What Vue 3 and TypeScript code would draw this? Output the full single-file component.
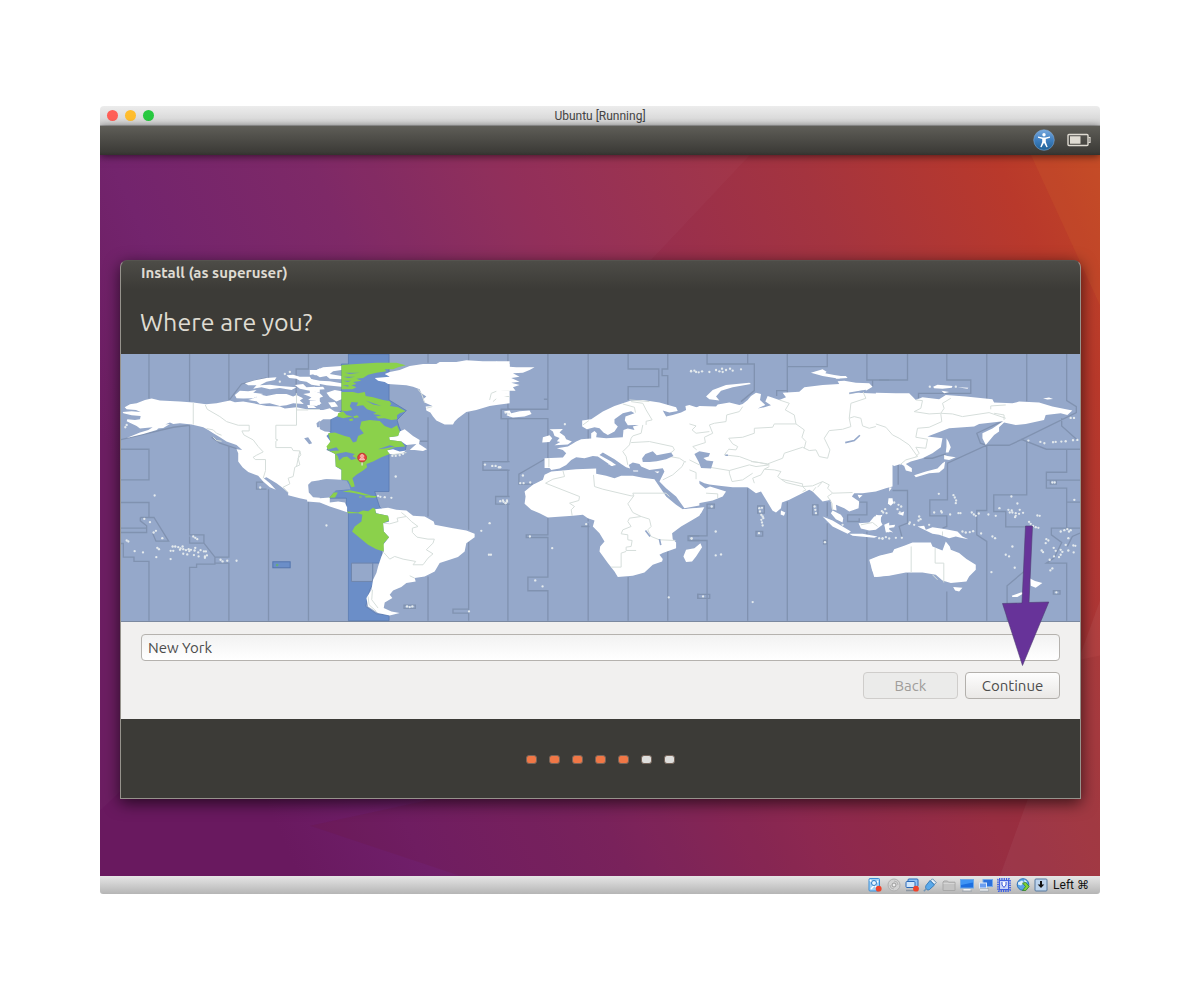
<script setup lang="ts">
import { ref } from 'vue'

interface Region {
  dx: number
  land: string
  borders: string
  zones: string
  specks: [number, number][]
}

const location = ref('New York')
const steps = 7
const currentStep = 5

// Map outlines, one entry per 190-unit slice of the world, west to east.
const regions: Region[] = [
  {
    dx: 0,
    land: 'M8,186L35,184 62,186 48,180 20,178 14,172 30,163 50,160 75,150 95,146 120,152 180,155 220,158 258,163 290,160 330,152 345,157 370,155 400,160 440,168 480,170 495,176 530,172 560,178 600,178V455L575,453 540,445 505,436 505,428 490,415 470,400 440,382 432,385 450,400 468,420 450,412 430,395 415,378 385,366 368,352 355,335 355,310 350,298 367,300 350,285 320,275 300,262 280,250 265,240 250,232 215,224 180,220 160,222 150,218 125,228 110,240 70,252 20,264 60,248 85,240 98,232 60,236 50,228 20,214 22,208 45,210 60,208 62,198 35,196 10,190Z M375,100L400,92 440,84 470,82 465,90 440,95 420,106 450,104 480,108 530,112 515,120 480,114 450,118 425,112 400,116 410,106 385,106Z M345,135L360,122 385,124 410,120 400,128 430,132 400,145 370,146 350,145Z M385,150L410,142 420,134 440,138 470,132 500,132 520,140 530,135 550,145 540,152 552,162 520,160 500,166 480,168 450,160 420,162 410,154Z M500,76L520,74 540,80 570,80 575,88 600,98V108L575,104 560,95 540,92 530,86 508,84Z M575,70L600,55V75L585,76Z M525,105L550,102 560,112 585,110 600,118V128L570,122 540,116Z M550,132L575,128 600,135V165L580,160 590,150 565,150 575,142Z M562,165L580,166 590,174 565,174Z M110,236L135,224 150,222 130,234Z',
    borders: 'M220,158V224 M256,165L262,178 300,200 320,215 355,226H388V243H366L372,255 400,270 415,290 430,306 410,316 400,322 406,329H437V362L430,385 M530,130V226H468V268L474,270 468,274V293H515L520,302 540,303 543,315 535,325 540,345 525,352 520,380 505,385 510,402 490,412 505,428 M530,180H600 M260,236L280,240 290,250 305,256 M280,262L290,272 305,274 M540,303L530,350',
    zones: 'M87,12V146 M209,12V155 M327,12V152 M446,12V84 M566,12V57H529V130 M327,152L365,102 440,84 M0,298H87V390H0 M0,458H87V503 M61,503H102L146,574H108L98,550 M61,503V513L80,528V548H0 M0,535H78 M0,581H10V622H42V635H87V813 M209,228V555H252V580H209V560 M252,580L285,622H327V290 M285,622V643H230V653H209V813 M285,640H327V813 M446,418V813 M440,418H410V397H430 M566,455V813 M0,270L160,232 210,226 M275,262L300,280 350,296',
    specks: [[73,507],[90,517],[104,437],[108,543],[101,548],[127,565],[20,572],[25,575],[44,604],[69,608],[109,622],[112,594],[117,598],[152,628],[152,603],[160,603],[158,590],[166,590],[175,592],[182,596],[188,590],[180,600],[190,598],[198,601],[206,598],[208,604],[190,612],[202,614],[213,600],[226,594],[224,602],[235,608],[222,616],[236,620],[242,601],[252,605],[258,605],[255,620],[255,624],[261,617],[220,560],[226,564],[232,568],[302,630],[308,635],[322,633],[350,633],[421,413],[495,72],[510,66],[480,95],[20,225],[16,232]]
  },
  {
    dx: 570,
    land: 'M-5,180L40,180 60,175 75,185 95,188 83,198 63,208 40,208 20,222 25,235 45,245 62,246 50,258 62,275 50,300 76,312 78,350 95,360V390L50,388 20,392 -10,400Z M-8,432L20,446 60,443V458L85,455 105,458 112,472V487L90,480 60,470 30,458 -8,455Z M0,60L20,60 40,52 95,48V60L70,64 60,72 95,78V88L60,86 50,78 30,82 15,72 0,75Z M0,86L30,92 60,94 95,100V110L50,106 20,100 0,98Z M5,112L40,110 45,118 15,120Z M50,128L75,120 95,124V148L80,155 60,142Z M0,118L30,130 40,140 20,148 0,140Z M0,152L25,150 35,160 20,168 0,166Z M55,158L75,156 85,170 65,172Z M195,84L240,80 225,72 240,66 270,60 300,48 340,42 380,42 390,36 440,36 470,31 520,34 600,34V160L560,165 540,168 500,180 470,186 445,205 435,215 430,224 405,224 380,212 370,200 362,188 350,182 348,170 368,168 345,158 340,148 350,140 335,130 330,118 310,110 290,106 235,102 225,96 205,92Z M270,245L285,238 310,258 330,270 328,282 352,298 340,303 315,300 300,300 320,282 290,285 275,275 240,270 238,262 265,258Z M230,302L250,298 270,305 290,302 275,312 240,312Z M195,478L235,474 260,480 290,482 310,498 345,500 372,515 375,525 430,535 470,542 495,552 495,562 470,580 465,605 445,622 420,630 390,640 375,665 345,680 315,685 318,695 290,700 275,712 250,722 240,735 248,745 225,758 222,775 245,785 270,790 240,797 205,790 175,770 170,745 185,720 190,690 200,670 205,650 215,620 222,605 220,585 238,562 222,545 220,520 238,515 235,498 200,490Z',
    borders: 'M222,520L240,522 265,515 262,505 290,500 275,488 M290,500L305,515 325,530 308,535 308,548 322,562 355,568H374L370,580 350,600 370,612 355,625 340,645 310,645 318,635 280,628 255,620 240,628 222,608 M540,150L545,130 570,120 600,122 M550,155L570,138 600,140 M560,125L590,132 M345,158L335,130 325,118 M350,175L368,170 M245,315L290,308 M175,740L178,765 200,785 M188,720L186,750 205,775 M315,685L300,678',
    zones: 'M355,12V38 M355,202V500 M477,12V32 M477,188V540 M477,575V813 M355,680V813 M330,274H355 M600,335H520V361H600 M600,178H575V206H600 M600,440H558V463H600 M283,766H317V776H283Z M477,778H430V790H477',
    specks: [[258,380],[540,520],[515,543],[538,615],[544,615],[526,344],[548,348],[558,348],[572,352],[572,454],[582,456],[592,452],[588,460],[50,527],[292,770],[300,772],[308,770],[248,318],[258,318],[270,316],[280,312],[478,785],[212,441],[225,442],[245,444],[588,188],[595,192],[205,438]]
  },
  {
    dx: 1140,
    land: 'M-10,34L10,44 30,42 30,50 50,52 105,52 90,60 70,68 40,70 60,80 35,84 60,95 35,98 60,105 40,112 48,122 5,122 30,136 10,142 22,152 -10,164Z M12,185L30,182 35,190 60,184 90,182 96,192 75,200 40,203 20,196 32,192Z M150,238L190,237 180,248 195,258 200,268 217,275 205,284 165,286 182,276 172,274 180,264 165,258 160,245Z M130,262L150,256 158,265 150,276 128,278Z M570,165L600,175V467L555,475 530,440 500,415 480,395 495,365 490,355 450,360 425,350 420,342 400,338 388,345 392,356 380,352 365,342 345,328 310,308 300,315 335,335 350,345 335,348 325,340 295,320 280,318 255,325 230,322 215,330 200,345 180,356 155,360 150,354 135,354V325L190,323 200,310 190,300 172,295 205,290 230,275 245,268 275,266 275,250 285,243 292,250 290,262 320,265 370,262 372,240 385,236 405,240 400,230 430,222 445,224 385,226 376,212 378,200 405,190 395,184 370,190 345,208 345,220 355,230 345,245 325,255 312,248 300,235 285,232 262,238 248,230V212L275,208 310,185 345,168 390,153 430,150 480,158 530,172 535,183 510,188 490,182 500,200 520,195 545,188 560,180 558,168Z M155,365L190,362 230,358 290,356 290,372 320,378 345,385 365,378 400,378 430,384 465,388 500,440 530,465 550,478 612,474 600,498 580,510 545,530 518,550 520,568 530,578 530,595 490,610 480,615 490,628 488,635 460,645 435,668 400,678 355,682 345,665 325,640 300,605 302,590 315,575 300,550 280,530 285,512 265,505 250,495 220,498 145,503 120,490 95,480 75,462 78,440 75,425 100,405 130,390 135,375Z M325,342h18l-2,7z M400,362h16v3h-14z M465,365h15l-5,5z',
    borders: 'M370,162L405,172 408,188 M395,155L430,160 440,180 458,210 440,214V225 M430,225L425,250 400,258 395,265 390,285 370,305 380,320 385,345 M395,278L450,275 520,290 525,300 515,308 M600,222L578,228 585,242 600,246 M600,284L580,295 585,310 M500,318L540,325 555,335 548,350 520,375 490,390 M555,335L575,340 570,360 600,390 M148,325V352 M190,362L195,380 160,388 138,400 240,440 238,452 210,460 225,470 215,480 218,498 M282,375L285,410 310,418 395,438H403L400,430H500L510,440 M403,438L385,462 390,470 400,488 425,500 390,505 385,515 395,530 370,540 365,552 385,555V570L398,572 395,590 380,592V602H410 M380,605L365,610V652H335 M425,500L450,508 455,530 445,540 455,560 480,570 528,572 M268,212L250,225 M390,150L450,155',
    zones: 'M25,12V40 M25,155V178H145V12 M5,178V206H145V325 M25,206V335 M25,361V440 M25,463V813 M266,12V208 M266,240V268 M386,12V57H478V110H386V150 M505,12V57H488V77H505V165 M145,503V555H80V563H145V682H85V723H145V813 M266,500V515 M270,530H245 M266,520V813 M386,682V813 M505,602V813 M135,328L58,373V403H100 M0,335H25 M0,361H25 M600,558H566V572H600 M600,734H595V746H600 M133,148h10',
    specks: [[70,377],[62,400],[72,400],[92,398],[-2,352],[260,523],[91,560],[158,595],[107,692],[129,710],[508,743],[576,566],[10,452],[22,455],[18,460],[575,63],[590,66],[196,223]]
  },
  {
    dx: 1710,
    land: 'M-10,182L10,178 30,168 80,170 85,164 120,158 150,165 160,162 175,150 185,138 200,128 215,132 212,150 228,165 205,176 225,172 245,166 228,155 235,138 270,150 290,142 280,128 330,125 345,112 400,105 450,102 445,94 465,92 500,98 540,100 550,110 530,122 505,128 540,130 600,132 610,135V410L590,415 560,425 520,430 495,430 488,440 510,455 508,475 480,485 465,475 440,465 442,482 428,478 425,450 400,455 385,440 370,425 360,420 330,435 300,450 278,458 275,475 260,488 250,483 230,450 215,425 200,430 175,412 130,412 90,408 60,404 45,400 20,388 30,402 48,416 62,410 110,425 100,440 70,452 20,462 -10,467Z M-20,478L45,472 35,490 -20,518Z M50,140L70,120 110,105 180,98 185,102 130,112 95,122 80,140 90,152 60,148Z M365,68L400,58 412,65 408,70 435,75 470,80 450,86 400,78Z M438,78L470,78 475,84 440,86Z M275,482L288,488 284,498 274,494Z M430,482L455,495 462,505 460,518 440,508 425,490Z M400,500L430,512 460,530 485,545 475,552 430,530Z M480,552L520,552 565,560 555,564 490,558Z M508,520L540,518 555,500 580,495 572,510 580,525 560,540 540,542 515,536Z M545,630L575,618 610,612V675L560,682 548,660Z M33,580L38,592 20,620 8,635 -10,637 -18,620 -10,600 15,595Z M505,435L520,436 510,445Z M585,525L600,518V548L590,545Z',
    borders: 'M118,265L160,262 195,250V235L250,232 255,222H320L315,195 288,180 300,160 270,150 M320,222L345,240 338,262 350,275 345,295 M118,265L130,282 145,290 140,300 118,298 105,315 150,320 190,335 235,342 280,325 285,310 340,292 360,302 380,300 390,320 415,325 422,300 405,265 420,242 460,238 485,230 480,205 495,200 515,205 520,228 540,235 590,222 610,245 M480,205L485,160 530,145 520,122 480,132 M160,170L150,185 112,195 110,215 75,220 60,225 70,250 45,262 48,278 10,290 22,300 M0,222L20,228 8,240 20,250 60,245 M60,352L120,362V370 M120,362L180,345 200,350 240,345 210,338 185,335 M240,350L225,358 215,375 190,385 195,400 M225,358L255,360 275,365 265,380 275,388 340,402V410L370,408 400,395 420,405 415,415 430,430 490,428 M120,370L128,395 160,390 190,370 M275,388L290,398 340,410 350,420 340,425 M380,412L370,425 M400,395L385,412 M430,430L415,440 428,460 430,480 M0,360L20,368V388 M50,430L85,432V445 M515,525L550,518 565,530 M0,330L30,345',
    zones: 'M53,12V42H195V122L155,155 M175,12V42 M294,12V135 M294,50H414V12 M533,12V90H600 M550,90V110 M262,138V122H294 M53,463V558H0 M0,572H53V813 M175,415V813 M294,455V813 M414,520V813 M414,457V500 M500,457H533V495H475V515H510V505 M533,545V813 M205,468h20v22h-20z M200,545h20v14h-20z M370,465h16v30h-16z M25,734h36v12h-36z M53,463h22v12H53z M403,572h10v10h-10z',
    specks: [[210,475],[218,474],[212,485],[216,495],[220,500],[216,510],[222,505],[218,518],[220,527],[209,550],[79,545],[79,617],[95,614],[41,740],[190,757],[7,566],[67,470],[376,470],[378,480],[380,490],[407,577],[5,64],[15,62],[38,64],[28,67],[60,66],[80,60],[90,64],[98,56],[110,60],[122,56],[130,62],[155,58],[100,66],[578,484],[588,478],[570,565],[590,562],[580,567],[460,525]]
  },
  {
    dx: 2280,
    land: 'M-10,128L50,130 90,130 110,150 130,142 180,148 200,135 260,140 340,148 345,158 400,160 420,155 480,158 520,170 580,182 565,195 545,190 500,195 495,210 440,222 410,225 375,218 360,232 360,245 345,255 320,285 310,265 310,250 340,236 372,214 300,222 285,230 210,235 145,260 190,265 185,292 160,310 130,325 95,335 80,342 98,355V366L80,362 75,348 65,342 45,348 30,340 0,350 5,360 25,366 35,378V395L10,415 -10,420Z M190,340L198,335 195,355 180,368 150,370 110,382 105,376 140,365 175,356Z M195,315L205,318 230,322 210,330 195,328Z M202,265L208,275 215,292 208,308 200,308 202,290Z M30,412L38,414 30,425Z M28,445L40,445 42,460 35,468 26,462Z M55,492L75,485 72,498Z M-10,495L5,498 5,520 -10,525Z M18,528L48,525 45,532 25,535 42,548 32,546 20,548Z M115,530L135,528 140,540 160,532 200,538 235,545 250,560 268,568 245,564 230,560 210,565 180,555 160,552 140,542Z M-30,630L0,618 40,608 45,598 75,588 100,578H155L160,590 190,602 200,575 212,590 215,600 240,610 262,628 290,645V660L270,680 262,695 215,700 190,692 170,675 130,668 80,668 30,678 -15,682Z M222,712L250,714 240,725 228,722Z M453,686L468,694 490,700 470,714 455,708Z M398,738L425,728 438,728 415,742 400,742Z M162,110L175,104 195,106 220,108 218,113 190,116 165,115Z M187,122L210,126 195,130Z M235,112L268,113 265,116Z M492,146L510,143 522,147 505,149Z',
    borders: 'M-10,222L20,232 40,255 60,265 90,285 115,320 80,330 62,345 M110,150L130,152 125,175 105,185 150,192 185,190 195,175 190,160 215,145 M185,190L220,192 250,200 330,188 380,205 M335,178V168L380,165 M185,192L188,215 150,232 115,235 110,262 145,268 140,295 110,292 120,310 110,320 M345,190L375,195V210 M96,590V668 M168,595V640H194V698 M190,545V558 M160,675L175,690',
    zones: 'M85,12V90H0 M203,12V90H275V130H118V145 M323,12V148 M443,12V155 M563,12V152L592,170V188L425,270 390,286H323L205,340V450H152V498H203V530L190,535 M323,286V482H293V555L323,575V813 M443,275V435H344V485H380V531H440 M425,268L502,298H603 M548,205V228L595,270 M563,298V367H502V415H563V535 M502,391H603 M563,457H603 M603,535H517V555L548,578 525,625 502,640H563V813 M603,550L580,560 565,590 M435,665L384,708V813 M203,725V813 M443,720V813 M40,422H85V520L60,530 68,560 M57,340V405 M320,286L304,280 293,250 372,213 M85,670V813 M135,325H160L200,312 M523,723h20v10h-20z M514,391h18v12h-18z',
    specks: [[179,432],[223,436],[227,443],[231,452],[230,460],[165,488],[186,484],[188,488],[213,494],[238,490],[244,490],[278,488],[284,494],[290,498],[299,491],[328,494],[350,498],[361,475],[388,480],[398,482],[397,440],[415,461],[400,488],[410,490],[422,480],[432,489],[410,498],[420,492],[408,502],[392,488],[475,497],[482,498],[450,516],[455,522],[462,528],[470,532],[478,534],[448,272],[484,276],[496,280],[522,277],[530,276],[547,275],[560,274],[582,271],[595,270],[520,398],[527,398],[586,450],[545,545],[556,541],[565,538],[575,541],[570,545],[502,568],[508,572],[500,580],[488,602],[492,607],[524,594],[545,600],[550,606],[545,615],[540,622],[530,603],[525,620],[512,630],[568,565],[560,585],[583,587],[589,588],[568,602],[584,608],[520,656],[514,662],[532,728],[407,654],[337,667],[380,615],[390,620],[400,590],[348,565],[340,560],[306,551],[260,548],[272,547],[282,544],[250,545],[45,458],[58,465],[66,470],[55,478],[62,488],[120,500],[124,508],[118,512],[105,525],[92,518],[90,522],[150,525],[10,565],[30,566],[50,564],[68,564],[22,490],[12,488],[575,204],[585,204],[152,110],[230,110]]
  }
]

const zoneShape = 'M116,12H238V150L290,182 262,210 268,230 290,285 286,305 238,305V425H195L210,472 238,495V580L215,605V640H187V695L192,700 180,720 168,770 200,792 238,797V813H116V485L110,480V445H60L75,422 116,418 90,380 76,350V310L50,298V250L63,245V208L95,182V42H116Z'

const zoneLand = [
  'M95,45L140,42 200,38 260,38 288,46 265,52 250,58 225,58 230,64 200,68 175,74 160,84 140,86 155,92 130,96 140,102 125,106 140,112 128,118H95Z',
  'M95,126L130,126 145,130 165,126 168,138 190,142 220,150 240,154 245,162 240,168 265,172 288,184 270,190 262,196V208L245,210 225,205 205,206 190,192 200,188 172,178 160,166 140,168 145,158 125,156 120,168 128,180 110,184 95,182Z',
  'M85,190L100,184 110,195 128,200 100,205 83,200Z M130,200l12,-4 6,6 -14,2z M118,208l10,-2 2,6 -10,1z',
  'M155,215L180,210 210,213 225,228 245,236 262,226 270,245 265,258 238,262 240,270 275,275 286,290 255,292 232,302 240,312 215,322 190,335 170,342 172,352 160,362 140,375 128,385 132,398 135,410 125,412 115,392 95,390V358L78,350 76,312 55,300 50,290 62,275 55,250 75,248 105,258 120,262 130,278 140,275 145,258 162,250 150,235Z',
  'M98,426L120,421 150,427 182,436 165,437 140,431 118,427Z M164,440l14,-3 24,2 -6,5 -28,-1z M148,440h8v3h-8z M58,444L72,428 84,428 76,443Z',
  'M112,485L145,488 160,482 175,484 190,474 197,478 198,490 235,498 238,512 220,520 222,545 238,562 222,580V605L200,598 175,585 155,568 135,552 127,545 135,530 155,515 158,495 145,490 115,490Z'
]
</script>

<template>
  <main class="page">
    <section class="vm">
      <header class="mac-bar">
        <div class="lights">
          <button class="light close" aria-label="Close"></button>
          <button class="light minimise" aria-label="Minimise"></button>
          <button class="light zoom" aria-label="Zoom"></button>
        </div>
        <h1>Ubuntu [Running]</h1>
      </header>

      <nav class="panel" aria-label="System">
        <button class="tray" aria-label="Accessibility">
          <svg width="22" height="22" viewBox="0 0 22 22">
            <defs>
              <linearGradient id="orb" x1="0" y1="0" x2="0" y2="1">
                <stop offset="0" stop-color="#78a9dd" />
                <stop offset=".5" stop-color="#3f7fc0" />
                <stop offset="1" stop-color="#1f6196" />
              </linearGradient>
            </defs>
            <circle cx="11" cy="11" r="10.3" fill="url(#orb)" stroke="#8ab4e2" stroke-opacity=".5" />
            <circle cx="11" cy="5.8" r="1.7" fill="#fff" />
            <path d="M5 7.500l4.800 1h2.400l4.800-1v1.200l-4.200 1.400v3l1.900 4.800-1.200.4L11 13.700l-2.500 4.600-1.200-.4 1.900-4.800v-3L5 8.700z" fill="#fff" />
          </svg>
        </button>
        <button class="tray" aria-label="Battery">
          <svg width="24" height="14" viewBox="0 0 24 14">
            <rect x="1" y="1.500" width="20" height="11" rx="1" fill="none" stroke="#dfdbd2" stroke-width="1.400" />
            <path d="M21.500 4.500H23v5h-1.500" fill="none" stroke="#dfdbd2" stroke-width="1.200" />
            <path d="M3 3.300h10.500v7.400H3z" fill="#dfdbd2" />
          </svg>
        </button>
      </nav>

      <div class="wallpaper">
        <svg class="facets" viewBox="0 0 1000 720" preserveAspectRatio="none" aria-hidden="true">
          <path d="M0 0H650L550 106 340 330 0 655Z" fill="#fff" opacity=".025" />
          <path d="M931 0H1000V150Z" fill="#e07a30" opacity=".13" />
          <path d="M900 720L1000 445V720Z" fill="#fff" opacity=".05" />
          <path d="M210 670L1000 500V720H360Z" fill="#701818" opacity=".1" />
        </svg>

        <section class="dialog">
          <div class="dialog-title">Install (as superuser)</div>
          <h2>Where are you?</h2>

          <svg class="map" viewBox="3 12 2880 804" role="img" aria-label="Time zone map">
            <rect x="3" y="12" width="2880" height="804" fill="#95a8ca" />
            <g class="zones">
              <path v-for="r in regions" :key="r.dx" :d="r.zones" :transform="`translate(${r.dx} 0)`" />
            </g>
            <g transform="translate(570 0)">
              <path :d="zoneShape" fill="#6b8ec8" stroke="#5475ad" stroke-width="2" />
              <path d="M125,640H189V695H125Z" fill="#95a8ca" stroke="#6f86ac" stroke-width="3" />
            </g>
            <g v-for="r in regions" :key="r.dx" :transform="`translate(${r.dx} 0)`">
              <path :d="r.land" class="land" />
              <path :d="r.borders" class="borders" />
              <circle v-for="([x, y], i) in r.specks" :key="i" :cx="x" :cy="y" r="3.500" class="speck" />
            </g>
            <g fill="#95a8ca">
              <path d="M565,405L575,395 620,388 680,392 688,405 692,418 648,422 632,438 600,444 580,442 567,428Z" />
              <path d="M553,265L565,262 577,280 568,283 560,273Z M590,220L600,212V232H592Z" />
              <path d="M1568,325L1578,312 1600,304 1612,316 1655,308 1662,318 1640,328 1612,334 1590,336 1570,336Z" />
              <path d="M1725,312L1740,304 1772,310 1768,320 1752,324 1762,332 1782,334 1775,356 1745,354 1738,336Z" />
            </g>
            <g class="lakes">
              <path d="M2178,278L2205,272 2222,256M1578,542L1592,560M1620,568L1624,586M1818,316h8M2190,130L2240,122" />
            </g>
            <g transform="translate(570 0)">
              <path v-for="d in zoneLand" :key="d" :d="d" fill="#8bd14b" />
              <path d="M78,312L108,306 135,312 128,318 140,326 125,330 112,320 100,322 88,332 84,318Z M55,299L80,292 88,302 62,303Z M205,298L240,286 255,290 225,296Z M175,190L215,196 200,200Z M105,68h45l-30,4z M100,80h36l-20,4z M100,92h24l-10,4z M98,106h18v4z M168,152L215,168 190,164Z" fill="#6b8ec8" />
              <path d="M157,334V347" stroke="#dfe3df" stroke-width="4" />
              <circle cx="157" cy="323" r="13" fill="#e8483f" stroke="#bd3433" stroke-width="3" />
              <path d="M157 314a5 5 0 0 1 3 9l5 7h-16l5-7a5 5 0 0 1 3-9z" fill="#f7a39c" stroke="#fbd0cc" stroke-width="2" />
            </g>
            <rect x="459" y="636" width="52" height="18" fill="#6b8ec8" stroke="#5475ad" stroke-width="3" />
            <circle cx="472" cy="646" r="4" fill="#68aa7c" />
          </svg>

          <form class="form" @submit.prevent>
            <input v-model="location" type="text" aria-label="Location" />
            <div class="actions">
              <button type="button" disabled>Back</button>
              <button type="submit">Continue</button>
            </div>
          </form>

          <footer class="progress">
            <span v-for="n in steps" :key="n" class="dot" :class="{ done: n <= currentStep }"></span>
          </footer>

          <svg class="arrow" width="50" height="142" viewBox="0 0 50 142" aria-hidden="true">
            <path d="M24.500 1H31.500L28 77.500 47.800 77 21.500 140.500 1.500 78.500 21 78Z" fill="#673399" stroke="#4d3d72" stroke-width=".6" />
          </svg>
        </section>
      </div>

      <footer class="status">
        <div class="devices">
          <svg viewBox="0 0 14 14"><rect x="1" y=".5" width="10.500" height="12.500" rx="1" fill="#9fd0f8" stroke="#3c8fd6" /><path d="M2 2l8 9M3 11l7-8" stroke="#fff" stroke-width="1.500" /><circle cx="6" cy="5" r="2.500" fill="#e8f4fe" stroke="#2a7cc8" /><circle cx="10.700" cy="10.700" r="2.900" fill="#f0432b" /></svg>
          <svg viewBox="0 0 14 14"><circle cx="7" cy="7" r="6" fill="#d2d2d2" stroke="#b0b0b0" /><circle cx="7" cy="7" r="2" fill="#eee" stroke="#999" /><path d="M7 3a4 4 0 0 1 4 4M3 7a4 4 0 0 0 4 4" fill="none" stroke="#b5b5b5" /></svg>
          <svg viewBox="0 0 14 14"><rect x="3" y="1" width="10" height="7.500" rx="1" fill="#8fc0f4" stroke="#2a68b8" /><rect x="1" y="3.500" width="9" height="6" rx="1" fill="#cfe5fb" stroke="#2a68b8" /><path d="M1 12.500h8" stroke="#8a94a0" stroke-width="1.500" /><circle cx="11" cy="10.700" r="2.900" fill="#f0432b" /></svg>
          <svg viewBox="0 0 14 14"><path d="M9.500.8l3.700 3.700-2 2-3.700-3.700z" fill="#e4effa" stroke="#46759f" stroke-width=".8" /><path d="M7 2.500L11.500 7 6.500 11.500c-2 1.500-5-1-3.500-4z" fill="#5aa9ea" stroke="#236db2" stroke-width=".8" /><path d="M3.500 10.500L.8 13.200" stroke="#7396b5" stroke-width="1.500" /></svg>
          <svg viewBox="0 0 14 14"><path d="M1 12.500V4L2 3h3.500l1 1.200H13v8.300z" fill="#c3c3c3" stroke="#a8a8a8" /><path d="M1.500 5.500h11" stroke="#d5d5d5" /></svg>
          <svg viewBox="0 0 14 14"><rect x=".5" y="1.500" width="13" height="8.500" fill="#1c6fe0" stroke="#6ca7e8" /><path d="M1 2h12v2.500L1 7z" fill="#3f95f5" /><path d="M3.500 12h7" stroke="#f2f2f2" stroke-width="2" /><path d="M2 13h10" stroke="#8f9ba6" stroke-width=".8" /></svg>
          <svg viewBox="0 0 14 14"><rect x="4" y="1.500" width="9.500" height="7" fill="#2b70dc" stroke="#73a8ea" /><rect x=".5" y="5" width="7" height="5" fill="#6b9ef0" stroke="#ddeafa" /><path d="M1 12h8" stroke="#f2f2f2" stroke-width="2" /><path d="M1 13h9M1 10.800h9" stroke="#89a" stroke-width=".6" /></svg>
          <svg viewBox="0 0 14 14"><rect x="1" y="1" width="12" height="12" rx="1" fill="none" stroke="#3b5ee6" stroke-width="1.800" stroke-dasharray="1.300 1" /><rect x="2.500" y="2.500" width="9" height="9" fill="#c9d5fa" stroke="#4262e0" /><path d="M5 4v3l2 2.500L9 7V4" fill="#fff" stroke="#3858d8" /></svg>
          <svg viewBox="0 0 14 14"><circle cx="7" cy="6.500" r="5.800" fill="#5aa5e6" stroke="#2a6eb8" /><path d="M2 4.500l4-2 2 2-3 3-3-1zM8 1.500l3 2-2 2z" fill="#e0f0fa" /><path d="M6.500 5l3 3.500-3 4h3.300l3.400-4-3.400-4z" fill="#7fd236" stroke="#307d1c" stroke-width=".7" /></svg>
          <svg viewBox="0 0 14 14"><rect x="1" y="1" width="12" height="12" rx="1" fill="#bcd3ec" stroke="#57799f" /><path d="M6 3h2v3.500h2.300L7 10 3.700 6.500H6z" fill="#111" /></svg>
        </div>
        <span>Left ⌘</span>
      </footer>
    </section>
  </main>
</template>

<style>
body {
  background: #fff;
}
</style>

<style scoped>
* {
  box-sizing: border-box;
}

.page {
  padding: 106px 100px;
}

button,
input {
  margin: 0;
  font: inherit;
}

.vm {
  border-radius: 4px 4px 3px 3px;
  overflow: hidden;
  font-family: "Ubuntu", "Noto Sans", sans-serif;
}

.mac-bar {
  display: grid;
  grid-template-columns: 1fr auto 1fr;
  align-items: center;
  height: 20px;
  padding: 0 7px;
  background: linear-gradient(#ececec, #d3d3d3);
  border-bottom: 1px solid #aaa;
}

.lights {
  display: flex;
  gap: 7px;
}

.light {
  width: 11px;
  height: 11px;
  padding: 0;
  border: 0;
  border-radius: 50%;
}

.close { background: #ff5f57; }
.minimise { background: #ffbd2e; }
.zoom { background: #28c940; }

h1 {
  margin: 0;
  font: 400 12px/18px Roboto, sans-serif;
  color: #444;
}

.panel {
  position: relative;
  z-index: 1;
  display: flex;
  justify-content: flex-end;
  align-items: center;
  gap: 12px;
  height: 29px;
  padding: 0 9px 2px;
  background: linear-gradient(#5f5e58, #3c3b37 90%, #33322e);
  box-shadow: 0 1px 8px rgba(0, 0, 0, 0.6);
}

.tray {
  display: flex;
  padding: 0;
  border: 0;
  background: none;
}

.wallpaper {
  position: relative;
  padding: 105px 19px 77px 20px;
  background: linear-gradient(66deg, #69195f 15%, #701f6a 25%, #7b2464 40%, #902b57 55%, #a4343f 77%, #b9392b 92%, #c14526 100%);
}

.facets {
  position: absolute;
  inset: 0;
  width: 100%;
  height: 100%;
}

.dialog {
  position: relative;
  border: 1px solid #96938c;
  border-top-color: #55544f;
  border-radius: 7px 7px 0 0;
  background: linear-gradient(#4d4c47, #3c3b37 28px);
  box-shadow: 0 4px 16px rgba(0, 0, 0, 0.65);
}

.dialog-title {
  padding: 0 20px;
  color: #dfdbd2;
  font-size: 15px;
  font-weight: 700;
  line-height: 24px;
}

h2 {
  margin: 0;
  padding: 20px 19px 15px;
  color: #dfdbd2;
  font-size: 25px;
  font-weight: 400;
  line-height: 34px;
}

.map {
  display: block;
  width: 100%;
  height: auto;
}

.zones path {
  fill: none;
  stroke: #8092b0;
  stroke-width: 4;
}

.land {
  fill: #fff;
}

.borders {
  fill: none;
  stroke: #d6dedb;
  stroke-width: 3;
}

.speck {
  fill: #e4eaed;
}

.lakes path {
  fill: none;
  stroke: #95a8ca;
  stroke-width: 5;
}

.form {
  padding: 12px 20px 20px;
  background: #f1f0ef;
}

.form input {
  display: block;
  width: 100%;
  height: 27px;
  padding: 0 6px;
  border: 1px solid #b5b2ae;
  border-radius: 4px;
  background: linear-gradient(#f2f2f2, #fff);
  color: #4c4c4c;
  font-size: 15px;
}

.actions {
  display: flex;
  justify-content: flex-end;
  gap: 7px;
  margin-top: 11px;
}

.actions button {
  width: 95px;
  height: 27px;
  padding: 0;
  border: 1px solid #b3b0ac;
  border-radius: 4px;
  background: linear-gradient(#fdfdfd, #eae8e6);
  color: #4c4c4c;
  font-size: 15px;
}

.actions button:disabled {
  border-color: #cfcdcb;
  background: #ebebea;
  color: #a09d9a;
}

.progress {
  display: flex;
  justify-content: center;
  align-items: center;
  gap: 12px;
  height: 79px;
  padding-top: 2px;
}

.dot {
  width: 11px;
  height: 9px;
  border: 1px solid #77655a;
  border-radius: 3px;
  background: #dededc;
}

.dot.done {
  background: #f07746;
}

.arrow {
  position: absolute;
  top: 264px;
  right: 29px;
  pointer-events: none;
}

.status {
  display: flex;
  justify-content: flex-end;
  align-items: center;
  gap: 5px;
  height: 18px;
  padding: 0 11px 0 0;
  background: linear-gradient(#e6e6e6, #b5b5b5);
}

.devices {
  display: flex;
  justify-content: space-between;
  width: 180px;
}

.devices svg {
  width: 14px;
  height: 14px;
}

.status span {
  color: #111;
  font: 12px/18px Roboto, "DejaVu Sans", sans-serif;
}
</style>
